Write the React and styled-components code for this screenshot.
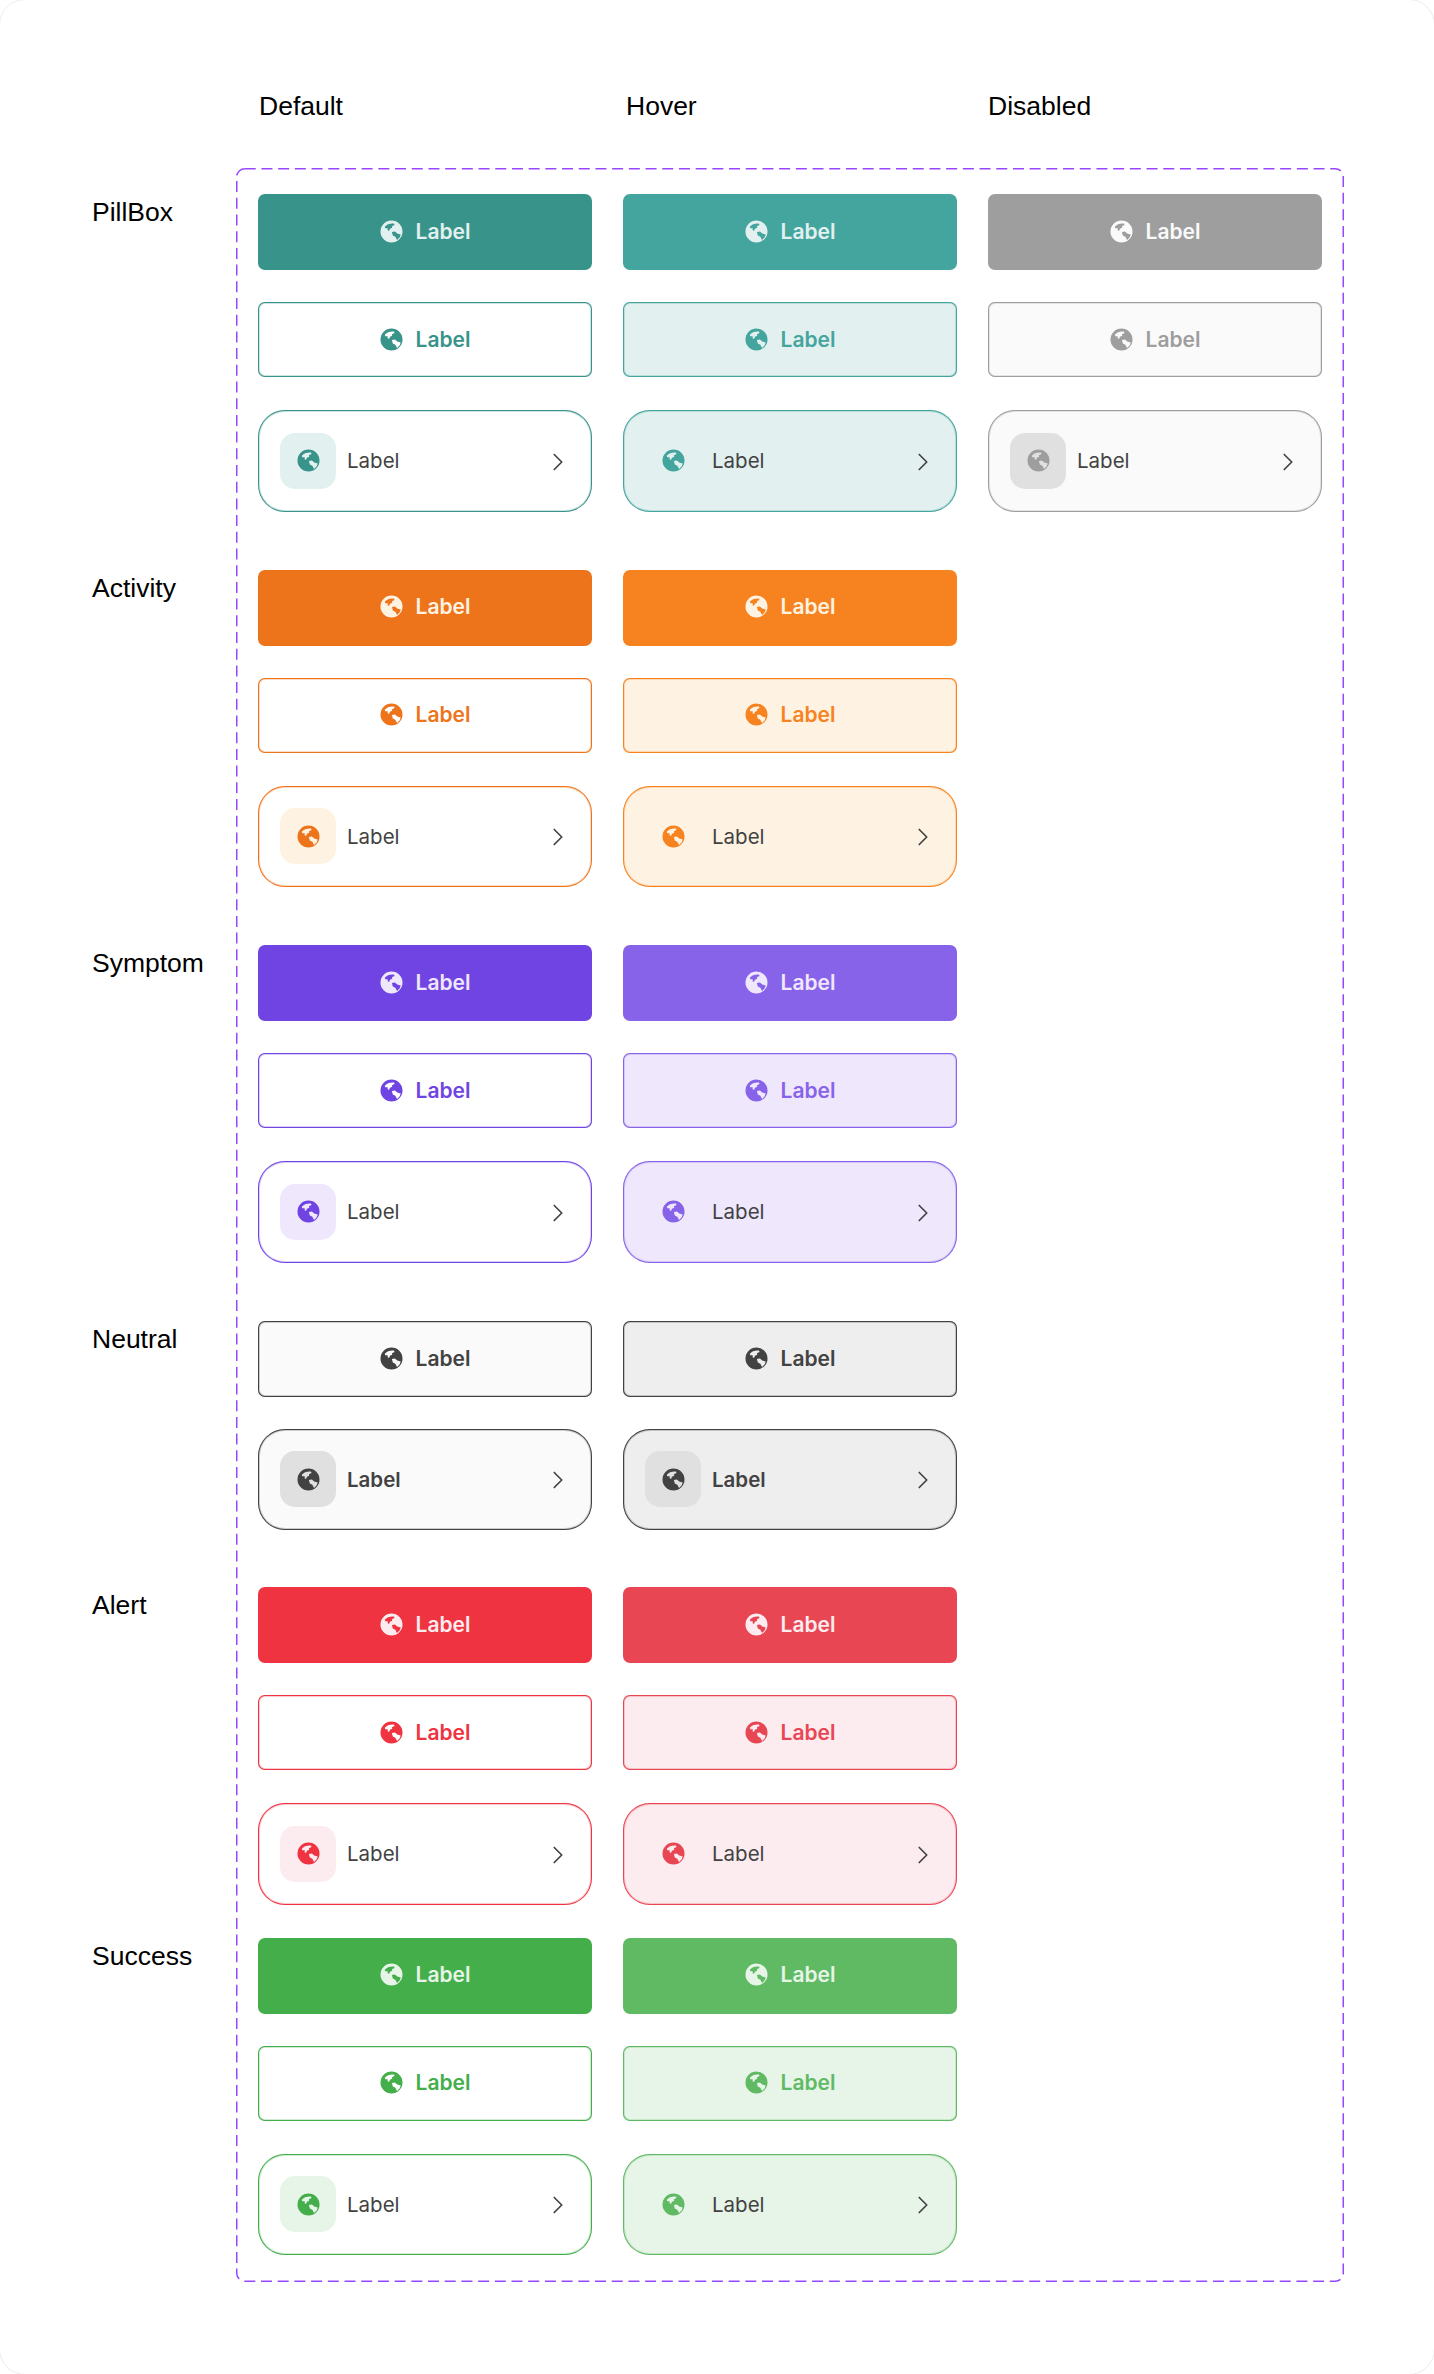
import React from 'react';
import styled, { createGlobalStyle } from 'styled-components';
import { ChevronRight } from 'lucide-react';

const GlobalStyle = createGlobalStyle`
  html, body {
    margin: 0;
    padding: 0;
    background: #ffffff;
    overflow: hidden;
  }
`;

const INK = '#424242';

const tones = {
  teal: { main: '#38938a', hover: '#44a59e', soft: '#e2f1f0', onMain: '#e2f1f0' },
  orange: { main: '#ee741c', hover: '#f6831f', soft: '#fef3e2', onMain: '#fef3e2' },
  purple: { main: '#7044e3', hover: '#8763e9', soft: '#efe7fc', onMain: '#efe7fc' },
  red: { main: '#ef3340', hover: '#e94654', soft: '#fcebef', onMain: '#fcebef' },
  green: { main: '#43ae4a', hover: '#60ba64', soft: '#e7f4e8', onMain: '#e7f4e8' },
};

// the outlines in the picture sit between 1px and 2px
const hairline = (color) => `inset 0 0 0 1px ${color}, inset 0 0 0 2px ${color}40`;

const Frame = styled.div`
  width: 1436px;
  height: 2376px;
  box-sizing: border-box;
  padding: 91px 0 0 91px;
  font-family: 'Liberation Sans', Arial, sans-serif;
  color: #000000;
  border: 1px solid #ececec;
  border-radius: 26px;
  margin: -1px;
  background: #ffffff;
`;

const HeaderRow = styled.div`
  display: grid;
  grid-template-columns: 334px 334px 334px;
  column-gap: 31px;
  margin: 0 0 47px 167px;
`;

const ColumnTitle = styled.div`
  font-size: 26.5px;
  line-height: 30px;
  padding-left: ${(p) => p.$inset}px;
`;

const Board = styled.div`
  position: relative;
  padding: 26px 0;
`;

const DashedFrame = styled.svg`
  position: absolute;
  left: 145px;
  top: 0;
  width: 1108px;
  height: 2114px;
  fill: none;
  stroke: #9747ff;
  stroke-width: 1.5px;
  stroke-dasharray: 11 5.7;
`;

const Section = styled.section`
  display: grid;
  grid-template-columns: 167px 1fr;
  margin-bottom: ${(p) => p.$after}px;

  &:last-of-type {
    margin-bottom: 0;
  }
`;

const SideLabel = styled.div`
  font-size: 26.5px;
  line-height: 30px;
  padding: 3px 0 0 1px;
`;

const VariantRows = styled.div`
  display: flex;
  flex-direction: column;
`;

const StateRow = styled.div`
  display: grid;
  grid-template-columns: 334px 334px 334px;
  column-gap: 31px;
  margin-bottom: ${(p) => p.$after}px;
`;

const PillButton = styled.div`
  display: flex;
  align-items: center;
  justify-content: center;
  gap: 13px;
  box-sizing: border-box;
  height: ${(p) => p.$height}px;
  padding-bottom: ${(p) => p.$lift}px;
  box-shadow: ${(p) => (p.$border ? hairline(p.$border) : 'none')};
  border-radius: 7px;
  background: ${(p) => p.$bg};
  color: ${(p) => p.$fg};
  font-family: Inter, 'Liberation Sans', sans-serif;
  font-size: 21px;
  font-weight: 600;
`;

const ListCard = styled.div`
  display: flex;
  align-items: center;
  box-sizing: border-box;
  height: 101.5px;
  padding: 0 19.5px 0 22px;
  box-shadow: ${(p) => hairline(p.$border)};
  border-radius: 27px;
  background: ${(p) => p.$bg};
  color: ${INK};
  font-family: Inter, 'Liberation Sans', sans-serif;
  font-size: 20.5px;
  font-weight: ${(p) => (p.$strong ? 600 : 400)};
`;

const IconTile = styled.div`
  display: flex;
  align-items: center;
  justify-content: center;
  flex: none;
  width: 56px;
  height: 56px;
  border-radius: 15px;
  background: ${(p) => p.$bg};
  color: ${(p) => p.$fg};
`;

const CardLabel = styled.span`
  flex: 1;
  margin-left: 11px;
`;

const Arrow = styled(ChevronRight)`
  flex: none;
  margin-top: 2px;
  color: ${INK};
`;

const GlobeIcon = styled.svg`
  flex: none;
  width: 23px;
  height: 23px;
  fill: currentColor;
  fill-rule: evenodd;
`;

// disc with the two land masses cut out of it
const Globe = () => (
  <GlobeIcon viewBox="0 0 24 24">
    <path d="M12 .5a11.5 11.5 0 1 0 0 23a11.5 11.5 0 1 0 0-23Z M5 7C7 4.5 10.5 3.2 14.5 3.6L15.2 5.2L12.4 6.4L12.8 8.2L10.4 9.2L9.4 11.4L8 10.8L8 8.5L5.5 8.5Z M12.4 12.6L15.6 12L18 14.2L21.6 15L20.6 18L17.8 20.8L16 17.6L13.4 16.2Z" />
  </GlobeIcon>
);

const Solid = ({ bg, fg }) => (
  <PillButton $height={76} $lift={2} $bg={bg} $fg={fg}>
    <Globe />
    Label
  </PillButton>
);

const Outline = ({ bg, fg, border, height = 75 }) => (
  <PillButton $height={height} $lift={1} $bg={bg} $fg={fg} $border={border}>
    <Globe />
    Label
  </PillButton>
);

const Card = ({ bg, border, tile, fg, strong }) => (
  <ListCard $bg={bg} $border={border} $strong={strong}>
    <IconTile $bg={tile} $fg={fg}>
      <Globe />
    </IconTile>
    <CardLabel>Label</CardLabel>
    <Arrow size={30} strokeWidth={1.35} />
  </ListCard>
);

const ToneRows = ({ tone, disabled }) => {
  const t = tones[tone];
  return (
    <VariantRows>
      <StateRow $after={32}>
        <Solid bg={t.main} fg={t.onMain} />
        <Solid bg={t.hover} fg={t.onMain} />
        {disabled && <Solid bg="#9e9e9e" fg="#fafafa" />}
      </StateRow>
      <StateRow $after={33}>
        <Outline bg="#ffffff" fg={t.main} border={t.main} />
        <Outline bg={t.soft} fg={t.hover} border={t.hover} />
        {disabled && <Outline bg="#fafafa" fg="#9e9e9e" border="#9e9e9e" />}
      </StateRow>
      <StateRow $after={0}>
        <Card bg="#ffffff" border={t.main} tile={t.soft} fg={t.main} />
        <Card bg={t.soft} border={t.hover} tile="transparent" fg={t.hover} />
        {disabled && <Card bg="#fafafa" border="#9e9e9e" tile="#e0e0e0" fg="#9e9e9e" />}
      </StateRow>
    </VariantRows>
  );
};

const NeutralRows = () => (
  <VariantRows>
    <StateRow $after={32}>
      <Outline bg="#fafafa" fg={INK} border={INK} height={76} />
      <Outline bg="#eeeeee" fg={INK} border={INK} height={76} />
    </StateRow>
    <StateRow $after={0}>
      <Card bg="#fafafa" border={INK} tile="#e0e0e0" fg={INK} strong />
      <Card bg="#eeeeee" border={INK} tile="#e0e0e0" fg={INK} strong />
    </StateRow>
  </VariantRows>
);

const App = () => (
  <Frame>
    <GlobalStyle />
    <HeaderRow>
      <ColumnTitle $inset={1}>Default</ColumnTitle>
      <ColumnTitle $inset={3}>Hover</ColumnTitle>
      <ColumnTitle $inset={0}>Disabled</ColumnTitle>
    </HeaderRow>
    <Board>
      <DashedFrame viewBox="0 0 1108 2114">
        <rect x="0.75" y="0.75" width="1106.5" height="2112.5" rx="8" />
      </DashedFrame>
      <Section $after={58}>
        <SideLabel>PillBox</SideLabel>
        <ToneRows tone="teal" disabled />
      </Section>
      <Section $after={58}>
        <SideLabel>Activity</SideLabel>
        <ToneRows tone="orange" />
      </Section>
      <Section $after={58}>
        <SideLabel>Symptom</SideLabel>
        <ToneRows tone="purple" />
      </Section>
      <Section $after={57}>
        <SideLabel>Neutral</SideLabel>
        <NeutralRows />
      </Section>
      <Section $after={33}>
        <SideLabel>Alert</SideLabel>
        <ToneRows tone="red" />
      </Section>
      <Section $after={0}>
        <SideLabel>Success</SideLabel>
        <ToneRows tone="green" />
      </Section>
    </Board>
  </Frame>
);

export default App;
